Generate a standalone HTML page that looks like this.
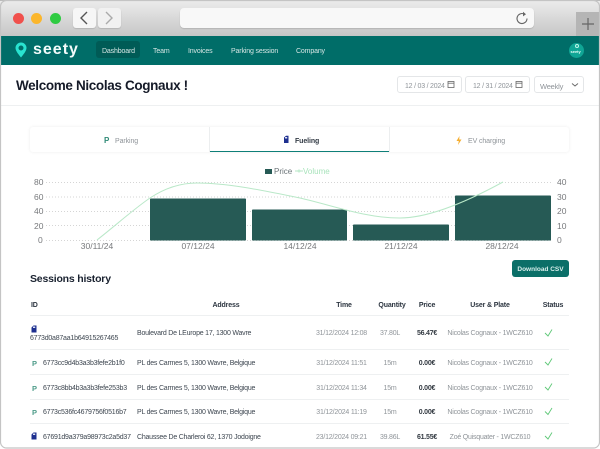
<!DOCTYPE html>
<html><head><meta charset="utf-8">
<style>
html,body{margin:0;padding:0;background:#fff}
#p{position:relative;width:600px;height:449px;overflow:hidden;background:#fff;font-family:"Liberation Sans","DejaVu Sans",sans-serif}
#p div,#p span.a{position:absolute;white-space:nowrap}
.c{transform:translateX(-50%)}
.t{font-size:7px;line-height:10px;letter-spacing:-.22px}
.g{color:#8f9499}.d{color:#3d4650}.b{color:#333a42;font-weight:bold}
.h{font-size:7px;line-height:10px;font-weight:bold;color:#2c3540;letter-spacing:-.15px}
.l{height:1px;background:#eef0f1;left:30px;width:539px}
.nav{color:#d5e6e4;font-size:7px;line-height:10px;top:47px;letter-spacing:-.15px}
.date{top:76px;height:15px;border:1px solid #e4e6e8;border-radius:3px;background:#fff;box-sizing:content-box}
.ax{font-size:8.5px;line-height:10px;color:#77797c}
</style></head><body>
<div id="p">
<div style="left:0;top:0;width:600px;height:36px;background:linear-gradient(#ececec,#c6c6c6)"></div>
<div style="left:0;top:0;width:600px;height:1px;background:#bbb"></div>
<div style="left:13px;top:13px;width:11px;height:11px;border-radius:50%;background:#f0504c"></div>
<div style="left:31px;top:13px;width:11px;height:11px;border-radius:50%;background:#fbb62c"></div>
<div style="left:50px;top:13px;width:11px;height:11px;border-radius:50%;background:#2fcb42"></div>
<div style="left:73px;top:8px;width:23px;height:20px;border-radius:3px;background:#f6f6f6;box-shadow:0 1px 1px #b5b5b5"></div>
<div style="left:98px;top:8px;width:23px;height:20px;border-radius:3px;background:#f1f1f1;box-shadow:0 1px 1px #b5b5b5"></div>
<svg style="position:absolute;left:73px;top:8px" width="48" height="20" fill="none"><path d="M14 4 L8 10 L14 16" stroke="#555" stroke-width="1.4"/><path d="M33 4 L39 10 L33 16" stroke="#aaa" stroke-width="1.4"/></svg>
<div style="left:180px;top:8px;width:354px;height:20px;border-radius:4px;background:#f8f8f8;box-shadow:0 1px 1px #b5b5b5"></div>
<svg style="position:absolute;left:515px;top:11px" width="14" height="15" fill="none"><path d="M9.5 3.2 A5 5 0 1 0 12 7.5" stroke="#666" stroke-width="1.1"/><path d="M8 .8 L11 3.2 L8 5.4Z" fill="#666"/></svg>
<div style="left:576px;top:12px;width:24px;height:24px;background:#b5b5b5"></div>
<svg style="position:absolute;left:576px;top:12px" width="24" height="24"><path d="M12 6V18M6 12H18" stroke="#666" stroke-width="1.2"/></svg>

<div style="left:1px;top:36px;width:598px;height:28.500px;background:#006d68"></div>
<svg style="position:absolute;left:15px;top:42px" width="12" height="16"><path fill-rule="evenodd" d="M6 0.500A5.500 5.500 0 0 1 11.500 6C11.500 9 8 13 6 15.500C4 13 .5 9 .5 6A5.500 5.500 0 0 1 6 .5ZM6 3.500A2.500 2.500 0 1 0 6 8.500A2.500 2.500 0 1 0 6 3.500Z" fill="#29e3d0"/></svg>
<div style="left:33px;top:40px;font-size:16px;line-height:20px;color:#f2fbfa;font-weight:bold;letter-spacing:1px">seety</div>
<div style="left:96px;top:41px;width:44px;height:17px;border-radius:3px;background:#005b56"></div>
<div class="nav" style="left:102px">Dashboard</div>
<div class="nav" style="left:153px">Team</div>
<div class="nav" style="left:188px">Invoices</div>
<div class="nav" style="left:231px">Parking session</div>
<div class="nav" style="left:296px">Company</div>
<div style="left:569px;top:43px;width:15px;height:15px;border-radius:50%;background:#10a595"></div>
<div style="left:570.500px;top:49px;font-size:4px;line-height:5px;color:#e8fff9;font-weight:bold">seety</div>
<div style="left:575px;top:44px;width:4px;height:4px;border-radius:50%;border:1px solid #bff5e8;box-sizing:border-box"></div>

<div style="left:16px;top:76px;font-size:13.500px;line-height:19px;font-weight:bold;color:#151a28;letter-spacing:-.35px">Welcome Nicolas Cognaux !</div>
<div class="date" style="left:397px;width:63px"></div>
<div class="t g" style="left:405px;top:82px">12 / 03 / 2024</div>
<div class="date" style="left:465px;width:63px"></div>
<div class="t g" style="left:473px;top:82px">12 / 31 / 2024</div>
<svg style="position:absolute;left:447px;top:80px" width="9" height="9" fill="none" stroke="#666" stroke-width=".8"><rect x="1" y="1.500" width="6" height="6"/><path d="M1 3.200H7"/></svg>
<svg style="position:absolute;left:515px;top:80px" width="9" height="9" fill="none" stroke="#666" stroke-width=".8"><rect x="1" y="1.500" width="6" height="6"/><path d="M1 3.200H7"/></svg>
<div class="date" style="left:534px;width:48px"></div>
<div class="t g" style="left:540px;top:82px;font-size:7.500px">Weekly</div>
<svg style="position:absolute;left:571px;top:82px" width="8" height="6" fill="none"><path d="M1 1.500L4 4L7 1.500" stroke="#666" stroke-width=".9"/></svg>
<div style="left:0;top:105px;width:600px;height:1px;background:#eef0f1"></div>

<div style="left:30px;top:127px;width:539px;height:25px;border-radius:3px;background:#fff;box-shadow:0 0 3px rgba(0,0,0,.08)"></div>
<div style="left:209px;top:127px;width:1px;height:25px;background:#eceeef"></div>
<div style="left:389px;top:127px;width:1px;height:25px;background:#eceeef"></div>
<div style="left:210px;top:151px;width:179px;height:1px;background:#0e7f78"></div>
<div style="left:104px;top:135px;font-size:8px;line-height:11px;font-weight:bold;color:#2f8a76">P</div>
<div class="t g" style="left:115px;top:137px;letter-spacing:-.1px">Parking</div>
<svg style="position:absolute;left:283px;top:135px" width="7" height="9"><path d="M1 8V2.500L3 .8H5.500V8Z" fill="#1d2f8f"/><rect x="2" y="2" width="2.200" height="1.500" fill="#dfe3f5"/></svg>
<div class="t" style="left:295px;top:137px;color:#343c46;font-weight:bold;letter-spacing:-.1px">Fueling</div>
<svg style="position:absolute;left:456px;top:136px" width="6" height="9"><path d="M3.500 0L.5 5H2.800L2 9L5.500 3.500H3.200Z" fill="#f5ae30"/></svg>
<div class="t g" style="left:468px;top:137px;letter-spacing:-.1px">EV charging</div>

<div style="left:265px;top:169px;width:7px;height:5px;background:#265a55"></div>
<div style="left:274px;top:166px;font-size:8px;line-height:11px;color:#6b7478">Price</div>
<svg style="position:absolute;left:295px;top:168px" width="8" height="6"><path d="M0 3H8" stroke="#b5e6c4"/><circle cx="4" cy="3" r="1.500" fill="#c5edd2"/></svg>
<div style="left:303px;top:166px;font-size:8px;line-height:11px;color:#a8e3bb">Volume</div>

<svg style="position:absolute;left:0;top:0" width="600" height="449" fill="none">
<g stroke="#d5d5d5" stroke-width="1" stroke-dasharray="1 2">
<path d="M46 182.500H551M46 197H551M46 211.500H551M46 225.500H551M46 240.500H551"/>
</g>
<g fill="#265a55">
<rect x="150" y="198.500" width="96" height="42" rx=".8"/>
<rect x="252" y="209.500" width="95" height="31" rx=".8"/>
<rect x="353" y="224.500" width="96" height="16" rx=".8"/>
<rect x="455" y="195.500" width="96" height="45" rx=".8"/>
</g>
<path d="M97 240C115 226 135 208 150 198C165 188 180 183 197 183C230 183 270 192 300 198C335 206 365 218 400 218C430 218 470 200 503 182" stroke="#b9e8c8" stroke-width="1"/>
</svg>
<div class="ax" style="left:34px;top:177px">80</div>
<div class="ax" style="left:34px;top:192px">60</div>
<div class="ax" style="left:34px;top:206px">40</div>
<div class="ax" style="left:34px;top:221px">20</div>
<div class="ax" style="left:38px;top:235px">0</div>
<div class="ax" style="left:557px;top:177px">40</div>
<div class="ax" style="left:557px;top:192px">30</div>
<div class="ax" style="left:557px;top:206px">20</div>
<div class="ax" style="left:557px;top:221px">10</div>
<div class="ax" style="left:557px;top:235px">0</div>
<div class="ax c" style="left:97px;top:241px">30/11/24</div>
<div class="ax c" style="left:198px;top:241px">07/12/24</div>
<div class="ax c" style="left:300px;top:241px">14/12/24</div>
<div class="ax c" style="left:401px;top:241px">21/12/24</div>
<div class="ax c" style="left:502px;top:241px">28/12/24</div>

<div style="left:30px;top:272px;font-size:10.500px;line-height:14px;font-weight:bold;color:#1a2230;letter-spacing:-.2px">Sessions history</div>
<div style="left:512px;top:260px;width:57px;height:17px;border-radius:3px;background:#0b6f68"></div>
<div class="c" style="left:540.500px;top:265px;font-size:6.500px;line-height:10px;font-weight:bold;color:#d9efec">Download CSV</div>

<div class="h" style="left:31px;top:301px">ID</div>
<div class="h c" style="left:226px;top:301px">Address</div>
<div class="h c" style="left:344px;top:301px">Time</div>
<div class="h c" style="left:392px;top:301px">Quantity</div>
<div class="h c" style="left:427px;top:301px">Price</div>
<div class="h c" style="left:490px;top:301px">User &amp; Plate</div>
<div class="h c" style="left:553px;top:301px">Status</div>
<div class="l" style="top:315px"></div>
<div class="l" style="top:349px"></div>
<div class="l" style="top:374px"></div>
<div class="l" style="top:399px"></div>
<div class="l" style="top:423px"></div>

<svg style="position:absolute;left:31px;top:325px" width="7" height="8"><path d="M.5 7.500V2.500L2.500 .5H5.500V7.500Z" fill="#1d2f8f"/><rect x="2" y="1.500" width="2.200" height="1.500" fill="#dfe3f5"/></svg>
<div class="t d" style="left:30px;top:334px">6773d0a87aa1b64915267465</div>
<div class="t d" style="left:137px;top:329px">Boulevard De LEurope 17, 1300 Wavre</div>
<div class="t g c" style="left:341.500px;top:329px">31/12/2024 12:08</div>
<div class="t g c" style="left:390px;top:329px">37.80L</div>
<div class="t b c" style="left:427px;top:329px">56.47€</div>
<div class="t g c" style="left:490px;top:329px">Nicolas Cognaux - 1WCZ610</div>

<div style="left:32px;top:359px;font-size:7.500px;line-height:10px;font-weight:bold;color:#4f9c8a">P</div>
<div class="t d" style="left:43px;top:359px">6773cc9d4b3a3b3fefe2b1f0</div>
<div class="t d" style="left:137px;top:359px">PL des Carmes 5, 1300 Wavre, Belgique</div>
<div class="t g c" style="left:341.500px;top:359px">31/12/2024 11:51</div>
<div class="t g c" style="left:390px;top:359px">15m</div>
<div class="t b c" style="left:427px;top:359px">0.00€</div>
<div class="t g c" style="left:490px;top:359px">Nicolas Cognaux - 1WCZ610</div>

<div style="left:32px;top:384px;font-size:7.500px;line-height:10px;font-weight:bold;color:#4f9c8a">P</div>
<div class="t d" style="left:43px;top:384px">6773c8bb4b3a3b3fefe253b3</div>
<div class="t d" style="left:137px;top:384px">PL des Carmes 5, 1300 Wavre, Belgique</div>
<div class="t g c" style="left:341.500px;top:384px">31/12/2024 11:34</div>
<div class="t g c" style="left:390px;top:384px">15m</div>
<div class="t b c" style="left:427px;top:384px">0.00€</div>
<div class="t g c" style="left:490px;top:384px">Nicolas Cognaux - 1WCZ610</div>

<div style="left:32px;top:408px;font-size:7.500px;line-height:10px;font-weight:bold;color:#4f9c8a">P</div>
<div class="t d" style="left:43px;top:408px">6773c536fc4679756f0516b7</div>
<div class="t d" style="left:137px;top:408px">PL des Carmes 5, 1300 Wavre, Belgique</div>
<div class="t g c" style="left:341.500px;top:408px">31/12/2024 11:19</div>
<div class="t g c" style="left:390px;top:408px">15m</div>
<div class="t b c" style="left:427px;top:408px">0.00€</div>
<div class="t g c" style="left:490px;top:408px">Nicolas Cognaux - 1WCZ610</div>

<svg style="position:absolute;left:31px;top:432px" width="7" height="8"><path d="M.5 7.500V2.500L2.500 .5H5.500V7.500Z" fill="#1d2f8f"/><rect x="2" y="1.500" width="2.200" height="1.500" fill="#dfe3f5"/></svg>
<div class="t d" style="left:43px;top:433px">67691d9a379a98973c2a5d37</div>
<div class="t d" style="left:137px;top:433px">Chaussee De Charleroi 62, 1370 Jodoigne</div>
<div class="t g c" style="left:341.500px;top:433px">23/12/2024 09:21</div>
<div class="t g c" style="left:390px;top:433px">39.86L</div>
<div class="t b c" style="left:427px;top:433px">61.55€</div>
<div class="t g c" style="left:490px;top:433px">Zoé Quisquater - 1WCZ610</div>

<svg style="position:absolute;left:0;top:0" width="600" height="449" fill="none" stroke="#5fc878" stroke-width=".9">
<path d="M545 333L548 336L552 329.500"/>
<path d="M545 362L548 365L552 358.500"/>
<path d="M545 387L548 390L552 383.500"/>
<path d="M545 411.500L548 414.500L552 408"/>
<path d="M545 436L548 439L552 432.500"/>
</svg>

<svg style="position:absolute;left:0;top:0" width="600" height="449" fill="none">
<path d="M.5 6A6 6 0 0 1 6.500 .5H593.500A6 6 0 0 1 599.500 6V442A6 6 0 0 1 593.500 448H6.500A6 6 0 0 1 .5 442Z" stroke="#c4c4c4" stroke-width="1.200"/>
</svg>
</div>
</body></html>
